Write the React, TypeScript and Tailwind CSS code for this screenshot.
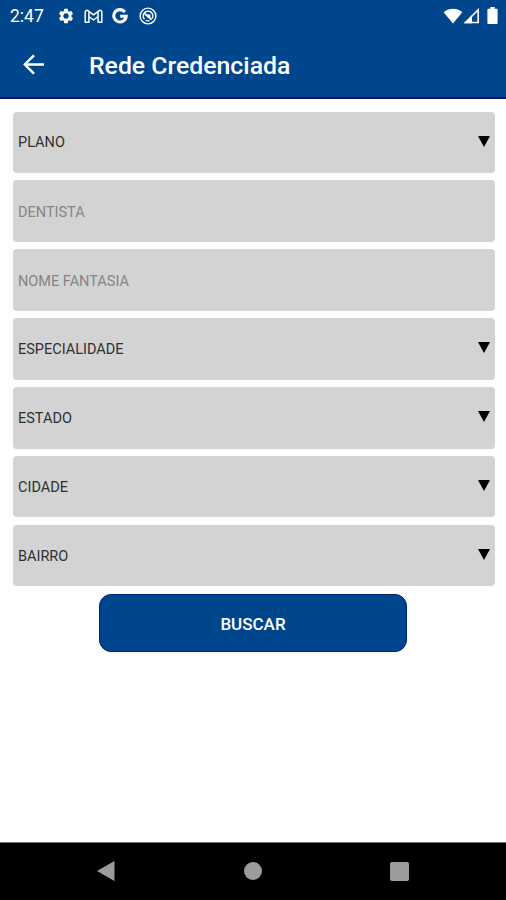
import React, { useState } from 'react';

interface Field {
  id: string;
  label: string;
  type: 'select' | 'text';
}

const fields: Field[] = [
  { id: 'plano', label: 'PLANO', type: 'select' },
  { id: 'dentista', label: 'DENTISTA', type: 'text' },
  { id: 'nomeFantasia', label: 'NOME FANTASIA', type: 'text' },
  { id: 'especialidade', label: 'ESPECIALIDADE', type: 'select' },
  { id: 'estado', label: 'ESTADO', type: 'select' },
  { id: 'cidade', label: 'CIDADE', type: 'select' },
  { id: 'bairro', label: 'BAIRRO', type: 'select' },
];

function StatusBar() {
  return (
    <div className="flex h-8 items-center justify-between pl-[10px] pr-2 text-white">
      <div className="flex items-center">
        <span className="w-[47px] pt-0.5 text-[17.5px] leading-none">2:47</span>
        <svg className="h-[18px] w-[18px]" viewBox="0 0 24 24" fill="currentColor">
          <path d="M19.14 12.94c.04-.3.06-.61.06-.94 0-.32-.02-.64-.07-.94l2.03-1.58a.49.49 0 0 0 .12-.61l-1.92-3.32a.49.49 0 0 0-.59-.22l-2.39.96a7 7 0 0 0-1.62-.94l-.36-2.54a.48.48 0 0 0-.48-.41h-3.84a.47.47 0 0 0-.47.41l-.36 2.54c-.59.24-1.13.57-1.62.94l-2.39-.96a.47.47 0 0 0-.59.22L2.74 8.87a.47.47 0 0 0 .12.61l2.03 1.58a7 7 0 0 0 0 1.88l-2.03 1.58a.49.49 0 0 0-.12.61l1.92 3.32c.12.22.37.29.59.22l2.39-.96c.5.38 1.03.7 1.62.94l.36 2.54c.05.24.24.41.48.41h3.84c.24 0 .44-.17.47-.41l.36-2.54a7 7 0 0 0 1.62-.94l2.39.96c.22.08.47 0 .59-.22l1.92-3.32a.47.47 0 0 0-.12-.61zM12 15.6a3.6 3.6 0 1 1 0-7.2 3.6 3.6 0 0 1 0 7.2z" />
        </svg>
        <svg className="ml-[9px] h-[15px] w-[19px]" viewBox="0 0 19 15" fill="none" stroke="currentColor" strokeWidth="1.5" strokeLinejoin="round">
          <path d="M1.2 13.3V3.2C1.2 1.4 3 .9 4.2 1.8l5.3 4 5.3-4c1.2-.9 3-.4 3 1.4v10.1h-3.7V7.5L9.5 11 4.9 7.5v5.8zM4.9 2.5v5M14.1 2.5v5" />
        </svg>
        <svg className="ml-[9px] h-4 w-4" viewBox="0 0 16 16" fill="none" stroke="currentColor" strokeWidth="3.1">
          <path d="M12.9 4A6.2 6.2 0 1 0 14.2 8.2H8.2" />
        </svg>
        <svg className="ml-[11px] h-[18px] w-[18px]" viewBox="0 0 18 18" fill="none" stroke="currentColor">
          <circle cx="9" cy="9" r="7.9" strokeWidth="1.4" />
          <path d="M5.5 12.2A4.8 4.8 0 1 1 13 11.6" strokeWidth="1.5" />
          <path d="M5.8 6.8L12.6 12.6" strokeWidth="1.9" />
          <path d="M7.5 7.5h3.8v3.6z" fill="currentColor" stroke="none" />
          <path d="M6.6 13.2a4.8 4.8 0 0 0 3.9.4" strokeWidth="1.3" />
        </svg>
      </div>
      <div className="flex items-center pb-px">
        <svg className="h-4 w-5" viewBox="0 0 20 16" fill="currentColor">
          <path d="M.6 4.2C6-.4 14-.4 19.4 4.2L10 15.4z" />
        </svg>
        <svg className="h-4 w-[17px]" viewBox="0 0 17 16">
          <path d="M2.5 14.5L15.2 1.8v12.7z" fill="none" stroke="currentColor" strokeWidth="1.6" />
          <path d="M1 15.2L9 7.2v8z" fill="currentColor" />
        </svg>
        <svg className="ml-[7px] h-[17px] w-[11px]" viewBox="0 0 11 17" fill="currentColor">
          <path d="M3.3 0h4.4v1.8h1.8c.7 0 1.1.5 1.1 1.1v13c0 .6-.4 1.1-1.1 1.1h-8C.8 17 .4 16.5.4 15.9v-13c0-.6.4-1.1 1.1-1.1h1.8z" />
        </svg>
      </div>
    </div>
  );
}

function Header() {
  return (
    <header className="h-[99px] border-b-2 border-[#00146e] bg-[#00468c]">
      <StatusBar />
      <div className="flex h-[66px] items-center pl-[23px] text-white">
        <button aria-label="Voltar" className="w-[66px]">
          <svg className="h-[22px] w-[22px]" viewBox="0 0 22 22" fill="none" stroke="currentColor" strokeWidth="2.4">
            <path d="M21 10.5H2.5M11 1.3L1.8 10.5l9.2 9.2" />
          </svg>
        </button>
        <h1 className="whitespace-nowrap pt-[3px] text-[24.8px] font-medium leading-none">Rede Credenciada</h1>
      </div>
    </header>
  );
}

function SelectField({ label }: { label: string }) {
  return (
    <button type="button" className="flex h-[61.5px] w-full items-center justify-between rounded-[4px] bg-[#d3d3d3] px-[5px] text-[14.5px] text-[#303030]">
      <span className="pt-[2px]">{label}</span>
      <svg className="mb-[2px] h-[11px] w-3" viewBox="0 0 12 11">
        <path d="M0 0h12L6 11z" fill="#000" />
      </svg>
    </button>
  );
}

export default function App() {
  const [values, setValues] = useState<Record<string, string>>({});

  return (
    <div className="flex h-[900px] w-[506px] flex-col overflow-hidden bg-white font-[Roboto,sans-serif]">
      <Header />

      <main className="flex flex-1 flex-col pl-[13px] pr-[11px] pt-[12.5px]">
        <div className="flex flex-col gap-[7.4px]">
          {fields.map((field) =>
            field.type === 'select' ? (
              <SelectField key={field.id} label={field.label} />
            ) : (
              <input
                key={field.id}
                type="text"
                placeholder={field.label}
                value={values[field.id] || ''}
                onChange={(e) => setValues({ ...values, [field.id]: e.target.value })}
                className="h-[61.5px] w-full rounded-[4px] bg-[#d3d3d3] px-[5px] pt-[2px] text-[14.5px] text-[#303030] outline-none placeholder:text-[#858585]"
              />
            )
          )}
        </div>
        <button
          type="button"
          className="mr-[2px] mt-2 h-[58px] w-[308px] self-center rounded-[12px] border border-[#001e78] bg-[#00468c] pt-[2px] text-[17px] font-medium text-white"
        >
          BUSCAR
        </button>
      </main>

      <nav className="flex h-[58px] items-center justify-between border-t border-[#707070] bg-black px-[97px] pb-px">
        <svg className="h-5 w-[18px]" viewBox="0 0 18 20" fill="#9c9c9c">
          <path d="M17.5 0v20L0 10z" />
        </svg>
        <div className="h-[18px] w-[18px] rounded-full bg-[#9c9c9c]" />
        <div className="h-[19px] w-[19px] rounded-[2px] bg-[#9c9c9c]" />
      </nav>
    </div>
  );
}
